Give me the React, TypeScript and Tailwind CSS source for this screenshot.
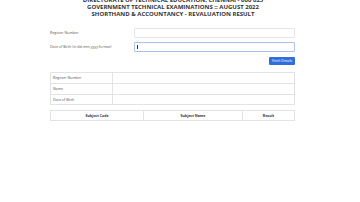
import React from "react";

export default function App() {
  const font = { fontFamily: '"Open Sans", "Noto Sans", sans-serif' };
  return (
    <div className="w-[360px] h-[202px] bg-white overflow-hidden" style={font}>
      <div className="mt-[-3px] w-[346px] flex flex-col items-center text-[6px] leading-[7px] font-bold text-[#333]">
        <div>DIRECTORATE OF TECHNICAL EDUCATION, CHENNAI - 600 025</div>
        <div>GOVERNMENT TECHNICAL EXAMINATIONS :: AUGUST 2022</div>
        <div>SHORTHAND &amp; ACCOUNTANCY - REVALUATION RESULT</div>
      </div>
      <div className="ml-[50px] w-[245px] mt-[10px] flex flex-col">
        <div className="flex items-center h-[10px]">
          <div className="w-[84px] text-[3.6px] text-[#555]">Register Number</div>
          <div className="flex-1 h-[10px] border-[0.5px] border-[#e2e6ea] rounded-[1px]"></div>
        </div>
        <div className="flex items-center h-[10px] mt-[4px]">
          <div className="w-[84px] text-[3.6px] text-[#555]">Date of Birth (in dd-mm-yyyy format)</div>
          <div className="flex-1 h-[10px] border-[0.7px] border-[#a9c4e8] rounded-[1px] flex items-center pl-[2px]">
            <div className="w-[0.5px] h-[4px] bg-[#333]"></div>
          </div>
        </div>
        <div className="flex justify-end mt-[5px]">
          <div className="w-[26px] h-[8px] bg-[#2f6fdb] rounded-[1px] text-white text-[3.4px] flex items-center justify-center">
            Fetch Details
          </div>
        </div>
        <div className="mt-[7px] border-[0.5px] border-[#e3e3e3] text-[3.6px] text-[#555]">
          {["Register Number", "Name", "Date of Birth"].map((l, i) => (
            <div key={l} className={"flex h-[10.3px] " + (i > 0 ? "border-t-[0.5px] border-[#e3e3e3]" : "")}>
              <div className="w-[62px] pl-[2px] flex items-center border-r-[0.5px] border-[#e3e3e3]">{l}</div>
              <div className="flex-1"></div>
            </div>
          ))}
        </div>
        <div className="mt-[5px] border-[0.5px] border-[#e3e3e3] text-[3.6px] font-bold text-[#333] flex h-[11px]">
          <div className="w-[93px] flex items-center justify-center border-r-[0.5px] border-[#e3e3e3]">Subject Code</div>
          <div className="w-[99px] flex items-center justify-center border-r-[0.5px] border-[#e3e3e3]">Subject Name</div>
          <div className="flex-1 flex items-center justify-center">Result</div>
        </div>
      </div>
    </div>
  );
}
